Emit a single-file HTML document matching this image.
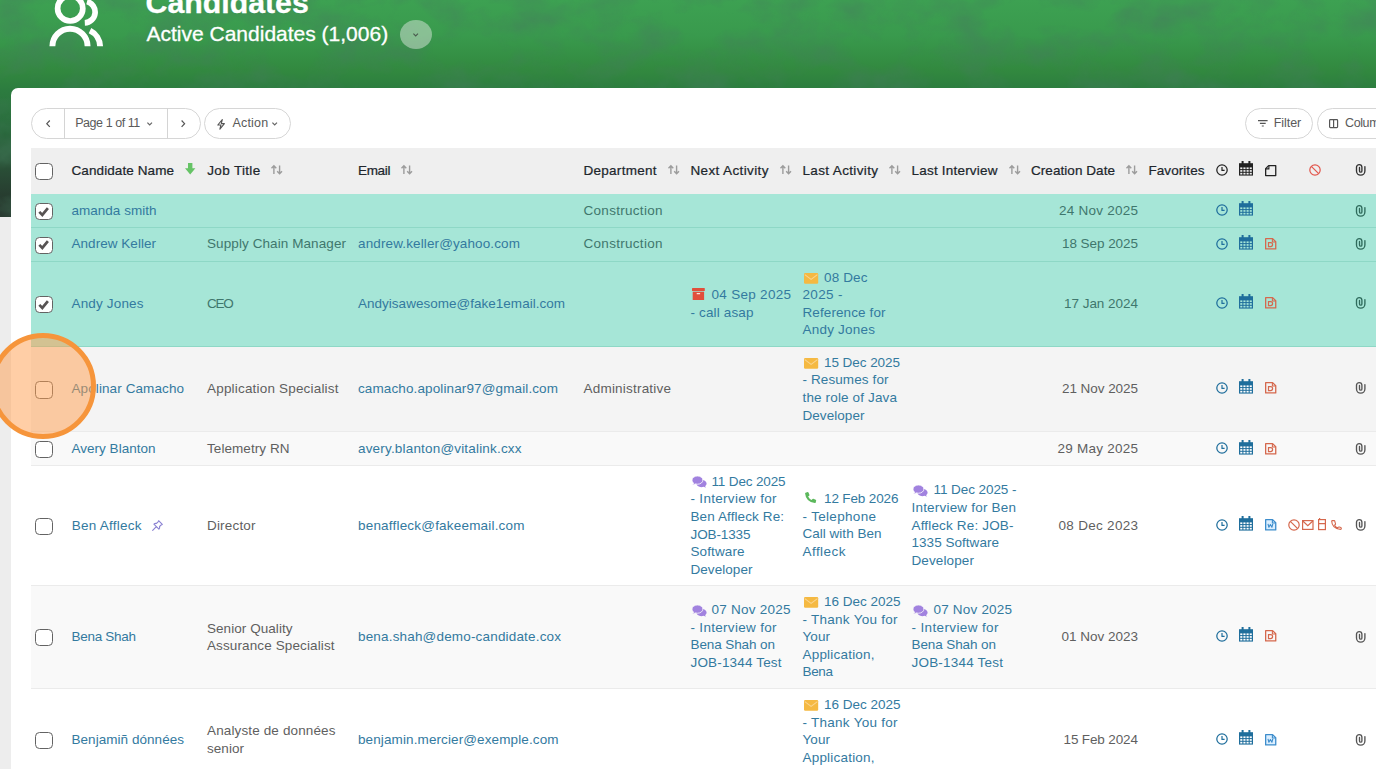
<!DOCTYPE html>
<html lang="en">
<head>
<meta charset="utf-8">
<title>Candidates</title>
<style>
*{box-sizing:border-box;margin:0;padding:0}
html,body{width:1376px;height:769px;overflow:hidden;background:#ededed;font-family:"Liberation Sans",sans-serif;font-size:13.5px;color:#5f5f5f}
body{position:relative}
a{text-decoration:none}
.abs{position:absolute}
svg{display:block;overflow:visible}
#banner{position:absolute;left:0;top:0;width:1376px;height:217px;overflow:hidden;background:linear-gradient(180deg,#3da152 0px,#399a4d 35px,#32893f 70px,#2c7c3f 90px,#2a6a3d 130px,#294a35 175px,#252f2a 217px)}
#card{position:absolute;left:11px;top:88px;width:1400px;height:700px;background:#fff;border-radius:7px 0 0 0}
#title{position:absolute;left:145.5px;top:-14.8px;font-size:30.3px;line-height:36px;font-weight:bold;color:#fff;white-space:nowrap;-webkit-text-stroke:.3px #fff}
#subtitle{position:absolute;left:146.5px;top:21.5px;font-size:21px;line-height:24px;color:#fff;white-space:nowrap;-webkit-text-stroke:.3px #fff}
#ddbtn{position:absolute;left:400px;top:20px;width:32px;height:29px;border-radius:50%;background:rgba(235,240,235,.45)}
.pill{position:absolute;top:108px;height:30.5px;border:1px solid #d6d6d6;border-radius:16px;background:#fff}
.hdr{position:absolute;left:31px;top:148px;width:1345px;height:46px;background:#efefef}
.row{position:absolute;left:31px;width:1345px;border-bottom:1px solid #ebebeb;background:#fff}
.row.sel{background:#a6e6d7;border-bottom:1px solid #8ed8c6}
.row.g{background:#f4f4f4}
.row.g2{background:#f9f9f9}
.tx{position:absolute;white-space:nowrap;line-height:20px;height:20px;font-size:13.5px}
.tx.h{color:#20262c;-webkit-text-stroke:.22px #20262c}
.tx.p{font-size:12.5px;color:#5a5a5a}
.cb{position:absolute;left:35px;width:17.6px;height:17.2px;border:1.3px solid #636363;border-radius:4.5px;background:#fff}
</style>
</head>
<body>
<div id="banner">
<svg width="1376" height="217" viewBox="0 0 1376 217" style="position:absolute;left:0;top:0"><filter id="tex" x="0" y="0" width="100%" height="100%"><feTurbulence type="fractalNoise" baseFrequency="0.022 0.03" numOctaves="4" seed="11"/><feColorMatrix type="matrix" values="0 0 0 0 0.06  0 0 0 0 0.2  0 0 0 0 0.11  1.6 0 0 0 -0.62"/></filter><rect x="0" y="0" width="1376" height="217" filter="url(#tex)" opacity=".65"/></svg>
</div>
<div id="card"></div>
<svg class="abs" style="left:0;top:0" width="120" height="60" viewBox="0 0 120 60"><g fill="none" stroke="#fff" stroke-width="5.7">
<circle cx="70.2" cy="8.4" r="12.6"/>
<path d="M52.4 46.3A17.6 17.6 0 0 1 87.6 46.3" stroke-width="5.9"/>
<path d="M87 1.6A10.8 10.8 0 0 1 84.8 22.85"/>
<path d="M90 30.7A17.8 17.8 0 0 1 100.1 46.3" stroke-width="5.9"/>
</g></svg>
<div id="title">Candidates</div>
<div id="subtitle">Active Candidates (1,006)</div>
<div id="ddbtn"></div>
<svg class="abs" style="left:413.3px;top:33.2px" width="5.4" height="4" viewBox="0 0 5.4 4"><path d="M.4 .6L2.7 3L5 .6" fill="none" stroke="#4a5a4e" stroke-width="1.1"/></svg>
<div class="hdr"></div>
<div class="row sel" style="top:194px;height:34px"></div>
<div class="row sel" style="top:228px;height:34px"></div>
<div class="row sel" style="top:262px;height:85px"></div>
<div class="row g" style="top:347px;height:85px"></div>
<div class="row g2" style="top:432px;height:33.5px"></div>
<div class="row " style="top:465.5px;height:120.5px"></div>
<div class="row g2" style="top:586px;height:103px"></div>
<div class="row " style="top:689px;height:102px"></div>
<svg class="abs" style="left:270.5px;top:165.2px" width="11.6" height="9.6" viewBox="0 0 11.6 9.6" preserveAspectRatio="none"><path d="M2.9 9V.9M.5 3.3L2.9 .8L5.3 3.3M8.6 .6V8.7M6.2 6.3L8.6 8.8L11 6.3" fill="none" stroke="#9c9c9c" stroke-width="1.4"/></svg>
<svg class="abs" style="left:401px;top:165.2px" width="11.6" height="9.6" viewBox="0 0 11.6 9.6" preserveAspectRatio="none"><path d="M2.9 9V.9M.5 3.3L2.9 .8L5.3 3.3M8.6 .6V8.7M6.2 6.3L8.6 8.8L11 6.3" fill="none" stroke="#9c9c9c" stroke-width="1.4"/></svg>
<svg class="abs" style="left:667.5px;top:165.2px" width="11.6" height="9.6" viewBox="0 0 11.6 9.6" preserveAspectRatio="none"><path d="M2.9 9V.9M.5 3.3L2.9 .8L5.3 3.3M8.6 .6V8.7M6.2 6.3L8.6 8.8L11 6.3" fill="none" stroke="#9c9c9c" stroke-width="1.4"/></svg>
<svg class="abs" style="left:779.5px;top:165.2px" width="11.6" height="9.6" viewBox="0 0 11.6 9.6" preserveAspectRatio="none"><path d="M2.9 9V.9M.5 3.3L2.9 .8L5.3 3.3M8.6 .6V8.7M6.2 6.3L8.6 8.8L11 6.3" fill="none" stroke="#9c9c9c" stroke-width="1.4"/></svg>
<svg class="abs" style="left:889px;top:165.2px" width="11.6" height="9.6" viewBox="0 0 11.6 9.6" preserveAspectRatio="none"><path d="M2.9 9V.9M.5 3.3L2.9 .8L5.3 3.3M8.6 .6V8.7M6.2 6.3L8.6 8.8L11 6.3" fill="none" stroke="#9c9c9c" stroke-width="1.4"/></svg>
<svg class="abs" style="left:1008.5px;top:165.2px" width="11.6" height="9.6" viewBox="0 0 11.6 9.6" preserveAspectRatio="none"><path d="M2.9 9V.9M.5 3.3L2.9 .8L5.3 3.3M8.6 .6V8.7M6.2 6.3L8.6 8.8L11 6.3" fill="none" stroke="#9c9c9c" stroke-width="1.4"/></svg>
<svg class="abs" style="left:1126px;top:165.2px" width="11.6" height="9.6" viewBox="0 0 11.6 9.6" preserveAspectRatio="none"><path d="M2.9 9V.9M.5 3.3L2.9 .8L5.3 3.3M8.6 .6V8.7M6.2 6.3L8.6 8.8L11 6.3" fill="none" stroke="#9c9c9c" stroke-width="1.4"/></svg>
<svg class="abs" style="left:184.7px;top:163px" width="10.4" height="11.4" viewBox="0 0 10.4 11.4" preserveAspectRatio="none"><path d="M3 0H7.4V5.2H10.4L5.2 11.4L0 5.2H3Z" fill="#66c366"/></svg>
<svg class="abs" style="left:1216.4px;top:164.2px" width="12" height="12" viewBox="0 0 12 12" preserveAspectRatio="none"><circle cx="6" cy="6" r="5.2" fill="none" stroke="#222" stroke-width="1.25"/><path d="M6 3.1V6.3H8.6" fill="none" stroke="#222" stroke-width="1.2"/></svg>
<svg class="abs" style="left:1239.1px;top:161.1px" width="14" height="14.6" viewBox="0 0 14 14.6" preserveAspectRatio="none"><path fill="#222" d="M0 2.2H14V14.6H0Z"/><rect x="2.6" y="0" width="2" height="3.4" fill="#222"/><rect x="9.4" y="0" width="2" height="3.4" fill="#222"/><rect x="1.25" y="6.4" width="2.1" height="1.7" fill="#efefef"/><rect x="4.4" y="6.4" width="2.1" height="1.7" fill="#efefef"/><rect x="7.55" y="6.4" width="2.1" height="1.7" fill="#efefef"/><rect x="10.7" y="6.4" width="2.1" height="1.7" fill="#efefef"/><rect x="1.25" y="9.1" width="2.1" height="1.7" fill="#efefef"/><rect x="4.4" y="9.1" width="2.1" height="1.7" fill="#efefef"/><rect x="7.55" y="9.1" width="2.1" height="1.7" fill="#efefef"/><rect x="10.7" y="9.1" width="2.1" height="1.7" fill="#efefef"/><rect x="1.25" y="11.8" width="2.1" height="1.7" fill="#efefef"/><rect x="4.4" y="11.8" width="2.1" height="1.7" fill="#efefef"/><rect x="7.55" y="11.8" width="2.1" height="1.7" fill="#efefef"/><rect x="10.7" y="11.8" width="2.1" height="1.7" fill="#efefef"/></svg>
<svg class="abs" style="left:1264.7px;top:164.5px" width="11.4" height="11.2" viewBox="0 0 11.4 11.2" preserveAspectRatio="none"><path d="M3.6 .65H10.75V10.55H.65V3.6Z" fill="none" stroke="#222" stroke-width="1.3" stroke-linejoin="round"/><path d="M3.9 .9V3.9H.9" fill="none" stroke="#222" stroke-width="1.1"/></svg>
<svg class="abs" style="left:1309.2px;top:164.3px" width="12" height="12" viewBox="0 0 12 12" preserveAspectRatio="none"><circle cx="6" cy="6" r="5.2" fill="none" stroke="#e2564c" stroke-width="1.2"/><path d="M2.32308 2.32308L9.67692 9.67692" stroke="#e2564c" stroke-width="1.2"/></svg>
<svg class="abs" style="left:1355.4px;top:164.4px" width="11" height="11.6" viewBox="0 0 11 11.6" preserveAspectRatio="none"><path d="M9.9 2.6V7A4.2 4.2 0 0 1 1.5 7V3.3A2.7 2.7 0 0 1 6.9 3.3V7A1.2 1.2 0 0 1 4.5 7V3.4" fill="none" stroke="#333" stroke-width="1.35" stroke-linecap="round"/></svg>
<div class="cb" style="top:163px"></div>
<div class="cb" style="top:203px"><svg width="17" height="17" viewBox="0 0 17 17" style="position:absolute;left:-1.3px;top:-1.3px"><path d="M4.3 8.9L7.3 11.9L12.9 5.1" fill="none" stroke="#575353" stroke-width="2.7"/></svg></div>
<svg class="abs" style="left:1216.4px;top:204.2px" width="12" height="12" viewBox="0 0 12 12" preserveAspectRatio="none"><circle cx="6" cy="6" r="5.2" fill="none" stroke="#1f6e9c" stroke-width="1.25"/><path d="M6 3.1V6.3H8.6" fill="none" stroke="#1f6e9c" stroke-width="1.2"/></svg>
<svg class="abs" style="left:1239.1px;top:201.4px" width="14" height="14.6" viewBox="0 0 14 14.6" preserveAspectRatio="none"><path fill="#1f6e9c" d="M0 2.2H14V14.6H0Z"/><rect x="2.6" y="0" width="2" height="3.4" fill="#1f6e9c"/><rect x="9.4" y="0" width="2" height="3.4" fill="#1f6e9c"/><rect x="1.25" y="6.4" width="2.1" height="1.7" fill="#a6e6d7"/><rect x="4.4" y="6.4" width="2.1" height="1.7" fill="#a6e6d7"/><rect x="7.55" y="6.4" width="2.1" height="1.7" fill="#a6e6d7"/><rect x="10.7" y="6.4" width="2.1" height="1.7" fill="#a6e6d7"/><rect x="1.25" y="9.1" width="2.1" height="1.7" fill="#a6e6d7"/><rect x="4.4" y="9.1" width="2.1" height="1.7" fill="#a6e6d7"/><rect x="7.55" y="9.1" width="2.1" height="1.7" fill="#a6e6d7"/><rect x="10.7" y="9.1" width="2.1" height="1.7" fill="#a6e6d7"/><rect x="1.25" y="11.8" width="2.1" height="1.7" fill="#a6e6d7"/><rect x="4.4" y="11.8" width="2.1" height="1.7" fill="#a6e6d7"/><rect x="7.55" y="11.8" width="2.1" height="1.7" fill="#a6e6d7"/><rect x="10.7" y="11.8" width="2.1" height="1.7" fill="#a6e6d7"/></svg>
<svg class="abs" style="left:1354.9px;top:204.6px" width="11" height="11.6" viewBox="0 0 11 11.6" preserveAspectRatio="none"><path d="M9.9 2.6V7A4.2 4.2 0 0 1 1.5 7V3.3A2.7 2.7 0 0 1 6.9 3.3V7A1.2 1.2 0 0 1 4.5 7V3.4" fill="none" stroke="#2f6b5c" stroke-width="1.35" stroke-linecap="round"/></svg>
<div class="cb" style="top:236.6px"><svg width="17" height="17" viewBox="0 0 17 17" style="position:absolute;left:-1.3px;top:-1.3px"><path d="M4.3 8.9L7.3 11.9L12.9 5.1" fill="none" stroke="#575353" stroke-width="2.7"/></svg></div>
<svg class="abs" style="left:1216.4px;top:237.8px" width="12" height="12" viewBox="0 0 12 12" preserveAspectRatio="none"><circle cx="6" cy="6" r="5.2" fill="none" stroke="#1f6e9c" stroke-width="1.25"/><path d="M6 3.1V6.3H8.6" fill="none" stroke="#1f6e9c" stroke-width="1.2"/></svg>
<svg class="abs" style="left:1239.1px;top:235px" width="14" height="14.6" viewBox="0 0 14 14.6" preserveAspectRatio="none"><path fill="#1f6e9c" d="M0 2.2H14V14.6H0Z"/><rect x="2.6" y="0" width="2" height="3.4" fill="#1f6e9c"/><rect x="9.4" y="0" width="2" height="3.4" fill="#1f6e9c"/><rect x="1.25" y="6.4" width="2.1" height="1.7" fill="#a6e6d7"/><rect x="4.4" y="6.4" width="2.1" height="1.7" fill="#a6e6d7"/><rect x="7.55" y="6.4" width="2.1" height="1.7" fill="#a6e6d7"/><rect x="10.7" y="6.4" width="2.1" height="1.7" fill="#a6e6d7"/><rect x="1.25" y="9.1" width="2.1" height="1.7" fill="#a6e6d7"/><rect x="4.4" y="9.1" width="2.1" height="1.7" fill="#a6e6d7"/><rect x="7.55" y="9.1" width="2.1" height="1.7" fill="#a6e6d7"/><rect x="10.7" y="9.1" width="2.1" height="1.7" fill="#a6e6d7"/><rect x="1.25" y="11.8" width="2.1" height="1.7" fill="#a6e6d7"/><rect x="4.4" y="11.8" width="2.1" height="1.7" fill="#a6e6d7"/><rect x="7.55" y="11.8" width="2.1" height="1.7" fill="#a6e6d7"/><rect x="10.7" y="11.8" width="2.1" height="1.7" fill="#a6e6d7"/></svg>
<svg class="abs" style="left:1264.8px;top:238.1px" width="11.4" height="11.6" viewBox="0 0 11.4 11.6" preserveAspectRatio="none"><path d="M.65 .65H7.6L10.75 3.8V10.95H.65Z" fill="none" stroke="#d5684d" stroke-width="1.3" stroke-linejoin="round"/><path d="M7.4 .9V4H10.5" fill="none" stroke="#d5684d" stroke-width="1.1"/><path d="M3.5 4.6H5.6A2 2 0 0 1 5.6 8.6H3.5Z" fill="none" stroke="#d5684d" stroke-width="1.2"/></svg>
<svg class="abs" style="left:1354.9px;top:238.2px" width="11" height="11.6" viewBox="0 0 11 11.6" preserveAspectRatio="none"><path d="M9.9 2.6V7A4.2 4.2 0 0 1 1.5 7V3.3A2.7 2.7 0 0 1 6.9 3.3V7A1.2 1.2 0 0 1 4.5 7V3.4" fill="none" stroke="#2f6b5c" stroke-width="1.35" stroke-linecap="round"/></svg>
<div class="cb" style="top:296.3px"><svg width="17" height="17" viewBox="0 0 17 17" style="position:absolute;left:-1.3px;top:-1.3px"><path d="M4.3 8.9L7.3 11.9L12.9 5.1" fill="none" stroke="#575353" stroke-width="2.7"/></svg></div>
<svg class="abs" style="left:1216.4px;top:296.8px" width="12" height="12" viewBox="0 0 12 12" preserveAspectRatio="none"><circle cx="6" cy="6" r="5.2" fill="none" stroke="#1f6e9c" stroke-width="1.25"/><path d="M6 3.1V6.3H8.6" fill="none" stroke="#1f6e9c" stroke-width="1.2"/></svg>
<svg class="abs" style="left:1239.1px;top:294px" width="14" height="14.6" viewBox="0 0 14 14.6" preserveAspectRatio="none"><path fill="#1f6e9c" d="M0 2.2H14V14.6H0Z"/><rect x="2.6" y="0" width="2" height="3.4" fill="#1f6e9c"/><rect x="9.4" y="0" width="2" height="3.4" fill="#1f6e9c"/><rect x="1.25" y="6.4" width="2.1" height="1.7" fill="#a6e6d7"/><rect x="4.4" y="6.4" width="2.1" height="1.7" fill="#a6e6d7"/><rect x="7.55" y="6.4" width="2.1" height="1.7" fill="#a6e6d7"/><rect x="10.7" y="6.4" width="2.1" height="1.7" fill="#a6e6d7"/><rect x="1.25" y="9.1" width="2.1" height="1.7" fill="#a6e6d7"/><rect x="4.4" y="9.1" width="2.1" height="1.7" fill="#a6e6d7"/><rect x="7.55" y="9.1" width="2.1" height="1.7" fill="#a6e6d7"/><rect x="10.7" y="9.1" width="2.1" height="1.7" fill="#a6e6d7"/><rect x="1.25" y="11.8" width="2.1" height="1.7" fill="#a6e6d7"/><rect x="4.4" y="11.8" width="2.1" height="1.7" fill="#a6e6d7"/><rect x="7.55" y="11.8" width="2.1" height="1.7" fill="#a6e6d7"/><rect x="10.7" y="11.8" width="2.1" height="1.7" fill="#a6e6d7"/></svg>
<svg class="abs" style="left:1264.8px;top:297.1px" width="11.4" height="11.6" viewBox="0 0 11.4 11.6" preserveAspectRatio="none"><path d="M.65 .65H7.6L10.75 3.8V10.95H.65Z" fill="none" stroke="#d5684d" stroke-width="1.3" stroke-linejoin="round"/><path d="M7.4 .9V4H10.5" fill="none" stroke="#d5684d" stroke-width="1.1"/><path d="M3.5 4.6H5.6A2 2 0 0 1 5.6 8.6H3.5Z" fill="none" stroke="#d5684d" stroke-width="1.2"/></svg>
<svg class="abs" style="left:1354.9px;top:297.2px" width="11" height="11.6" viewBox="0 0 11 11.6" preserveAspectRatio="none"><path d="M9.9 2.6V7A4.2 4.2 0 0 1 1.5 7V3.3A2.7 2.7 0 0 1 6.9 3.3V7A1.2 1.2 0 0 1 4.5 7V3.4" fill="none" stroke="#2f6b5c" stroke-width="1.35" stroke-linecap="round"/></svg>
<svg class="abs" style="left:692.3px;top:287.925px" width="12.8" height="12" viewBox="0 0 12.8 12" preserveAspectRatio="none"><rect x="0" y="0" width="12.8" height="3.1" rx=".6" fill="#e14f3b"/><path d="M.7 3.7H12.1V12H.7Z" fill="#e14f3b"/><rect x="4.6" y="5.1" width="3.6" height="1.1" rx=".5" fill="#fde3de"/></svg>
<svg class="abs" style="left:803.9px;top:272.575px" width="14.2" height="10.8" viewBox="0 0 14.2 10.8" preserveAspectRatio="none"><rect x="0" y="0" width="14.2" height="10.8" rx="1.2" fill="#f5b942"/><path d="M.8 1.6L7.1 6.4L13.4 1.6" fill="none" stroke="#fad590" stroke-width="1.1"/></svg>
<div class="cb" style="top:381.4px"></div>
<svg class="abs" style="left:1216.4px;top:382px" width="12" height="12" viewBox="0 0 12 12" preserveAspectRatio="none"><circle cx="6" cy="6" r="5.2" fill="none" stroke="#1f6e9c" stroke-width="1.25"/><path d="M6 3.1V6.3H8.6" fill="none" stroke="#1f6e9c" stroke-width="1.2"/></svg>
<svg class="abs" style="left:1239.1px;top:379.2px" width="14" height="14.6" viewBox="0 0 14 14.6" preserveAspectRatio="none"><path fill="#1f6e9c" d="M0 2.2H14V14.6H0Z"/><rect x="2.6" y="0" width="2" height="3.4" fill="#1f6e9c"/><rect x="9.4" y="0" width="2" height="3.4" fill="#1f6e9c"/><rect x="1.25" y="6.4" width="2.1" height="1.7" fill="#fff"/><rect x="4.4" y="6.4" width="2.1" height="1.7" fill="#fff"/><rect x="7.55" y="6.4" width="2.1" height="1.7" fill="#fff"/><rect x="10.7" y="6.4" width="2.1" height="1.7" fill="#fff"/><rect x="1.25" y="9.1" width="2.1" height="1.7" fill="#fff"/><rect x="4.4" y="9.1" width="2.1" height="1.7" fill="#fff"/><rect x="7.55" y="9.1" width="2.1" height="1.7" fill="#fff"/><rect x="10.7" y="9.1" width="2.1" height="1.7" fill="#fff"/><rect x="1.25" y="11.8" width="2.1" height="1.7" fill="#fff"/><rect x="4.4" y="11.8" width="2.1" height="1.7" fill="#fff"/><rect x="7.55" y="11.8" width="2.1" height="1.7" fill="#fff"/><rect x="10.7" y="11.8" width="2.1" height="1.7" fill="#fff"/></svg>
<svg class="abs" style="left:1264.8px;top:382.3px" width="11.4" height="11.6" viewBox="0 0 11.4 11.6" preserveAspectRatio="none"><path d="M.65 .65H7.6L10.75 3.8V10.95H.65Z" fill="none" stroke="#d5684d" stroke-width="1.3" stroke-linejoin="round"/><path d="M7.4 .9V4H10.5" fill="none" stroke="#d5684d" stroke-width="1.1"/><path d="M3.5 4.6H5.6A2 2 0 0 1 5.6 8.6H3.5Z" fill="none" stroke="#d5684d" stroke-width="1.2"/></svg>
<svg class="abs" style="left:1354.9px;top:382.4px" width="11" height="11.6" viewBox="0 0 11 11.6" preserveAspectRatio="none"><path d="M9.9 2.6V7A4.2 4.2 0 0 1 1.5 7V3.3A2.7 2.7 0 0 1 6.9 3.3V7A1.2 1.2 0 0 1 4.5 7V3.4" fill="none" stroke="#555" stroke-width="1.35" stroke-linecap="round"/></svg>
<svg class="abs" style="left:803.9px;top:357.675px" width="14.2" height="10.8" viewBox="0 0 14.2 10.8" preserveAspectRatio="none"><rect x="0" y="0" width="14.2" height="10.8" rx="1.2" fill="#f5b942"/><path d="M.8 1.6L7.1 6.4L13.4 1.6" fill="none" stroke="#fad590" stroke-width="1.1"/></svg>
<div class="cb" style="top:441px"></div>
<svg class="abs" style="left:1216.4px;top:442.4px" width="12" height="12" viewBox="0 0 12 12" preserveAspectRatio="none"><circle cx="6" cy="6" r="5.2" fill="none" stroke="#1f6e9c" stroke-width="1.25"/><path d="M6 3.1V6.3H8.6" fill="none" stroke="#1f6e9c" stroke-width="1.2"/></svg>
<svg class="abs" style="left:1239.1px;top:439.6px" width="14" height="14.6" viewBox="0 0 14 14.6" preserveAspectRatio="none"><path fill="#1f6e9c" d="M0 2.2H14V14.6H0Z"/><rect x="2.6" y="0" width="2" height="3.4" fill="#1f6e9c"/><rect x="9.4" y="0" width="2" height="3.4" fill="#1f6e9c"/><rect x="1.25" y="6.4" width="2.1" height="1.7" fill="#fff"/><rect x="4.4" y="6.4" width="2.1" height="1.7" fill="#fff"/><rect x="7.55" y="6.4" width="2.1" height="1.7" fill="#fff"/><rect x="10.7" y="6.4" width="2.1" height="1.7" fill="#fff"/><rect x="1.25" y="9.1" width="2.1" height="1.7" fill="#fff"/><rect x="4.4" y="9.1" width="2.1" height="1.7" fill="#fff"/><rect x="7.55" y="9.1" width="2.1" height="1.7" fill="#fff"/><rect x="10.7" y="9.1" width="2.1" height="1.7" fill="#fff"/><rect x="1.25" y="11.8" width="2.1" height="1.7" fill="#fff"/><rect x="4.4" y="11.8" width="2.1" height="1.7" fill="#fff"/><rect x="7.55" y="11.8" width="2.1" height="1.7" fill="#fff"/><rect x="10.7" y="11.8" width="2.1" height="1.7" fill="#fff"/></svg>
<svg class="abs" style="left:1264.8px;top:442.7px" width="11.4" height="11.6" viewBox="0 0 11.4 11.6" preserveAspectRatio="none"><path d="M.65 .65H7.6L10.75 3.8V10.95H.65Z" fill="none" stroke="#d5684d" stroke-width="1.3" stroke-linejoin="round"/><path d="M7.4 .9V4H10.5" fill="none" stroke="#d5684d" stroke-width="1.1"/><path d="M3.5 4.6H5.6A2 2 0 0 1 5.6 8.6H3.5Z" fill="none" stroke="#d5684d" stroke-width="1.2"/></svg>
<svg class="abs" style="left:1354.9px;top:442.8px" width="11" height="11.6" viewBox="0 0 11 11.6" preserveAspectRatio="none"><path d="M9.9 2.6V7A4.2 4.2 0 0 1 1.5 7V3.3A2.7 2.7 0 0 1 6.9 3.3V7A1.2 1.2 0 0 1 4.5 7V3.4" fill="none" stroke="#555" stroke-width="1.35" stroke-linecap="round"/></svg>
<svg class="abs" style="left:152.4px;top:519.7px" width="11" height="11" viewBox="0 0 11 11" preserveAspectRatio="none"><path d="M6.6 .7L10.3 4.4L9.2 4.9L7.6 6.5Q7.9 8 6.9 9.1L1.9 4.1Q3 3.1 4.5 3.4L6.1 1.8ZM4.3 6.7L.7 10.3" fill="none" stroke="#8a80d2" stroke-width="1.1" stroke-linejoin="round" stroke-linecap="round"/></svg>
<div class="cb" style="top:518.1px"></div>
<svg class="abs" style="left:1216.4px;top:518.9px" width="12" height="12" viewBox="0 0 12 12" preserveAspectRatio="none"><circle cx="6" cy="6" r="5.2" fill="none" stroke="#1f6e9c" stroke-width="1.25"/><path d="M6 3.1V6.3H8.6" fill="none" stroke="#1f6e9c" stroke-width="1.2"/></svg>
<svg class="abs" style="left:1239.1px;top:516.1px" width="14" height="14.6" viewBox="0 0 14 14.6" preserveAspectRatio="none"><path fill="#1f6e9c" d="M0 2.2H14V14.6H0Z"/><rect x="2.6" y="0" width="2" height="3.4" fill="#1f6e9c"/><rect x="9.4" y="0" width="2" height="3.4" fill="#1f6e9c"/><rect x="1.25" y="6.4" width="2.1" height="1.7" fill="#fff"/><rect x="4.4" y="6.4" width="2.1" height="1.7" fill="#fff"/><rect x="7.55" y="6.4" width="2.1" height="1.7" fill="#fff"/><rect x="10.7" y="6.4" width="2.1" height="1.7" fill="#fff"/><rect x="1.25" y="9.1" width="2.1" height="1.7" fill="#fff"/><rect x="4.4" y="9.1" width="2.1" height="1.7" fill="#fff"/><rect x="7.55" y="9.1" width="2.1" height="1.7" fill="#fff"/><rect x="10.7" y="9.1" width="2.1" height="1.7" fill="#fff"/><rect x="1.25" y="11.8" width="2.1" height="1.7" fill="#fff"/><rect x="4.4" y="11.8" width="2.1" height="1.7" fill="#fff"/><rect x="7.55" y="11.8" width="2.1" height="1.7" fill="#fff"/><rect x="10.7" y="11.8" width="2.1" height="1.7" fill="#fff"/></svg>
<svg class="abs" style="left:1264.8px;top:519.2px" width="11.4" height="11.6" viewBox="0 0 11.4 11.6" preserveAspectRatio="none"><path d="M.65 .65H7.6L10.75 3.8V10.95H.65Z" fill="#dcefff" stroke="#3d8dcc" stroke-width="1.3" stroke-linejoin="round"/><path d="M7.4 .9V4H10.5" fill="none" stroke="#3d8dcc" stroke-width="1.1"/><path d="M3 4.8L3.9 8.3L5.4 5.6L6.9 8.3L7.8 4.8" fill="none" stroke="#3d8dcc" stroke-width="1.1" stroke-linejoin="round"/></svg>
<svg class="abs" style="left:1354.9px;top:519.3px" width="11" height="11.6" viewBox="0 0 11 11.6" preserveAspectRatio="none"><path d="M9.9 2.6V7A4.2 4.2 0 0 1 1.5 7V3.3A2.7 2.7 0 0 1 6.9 3.3V7A1.2 1.2 0 0 1 4.5 7V3.4" fill="none" stroke="#555" stroke-width="1.35" stroke-linecap="round"/></svg>
<svg class="abs" style="left:1288.1px;top:518.7px" width="12" height="12" viewBox="0 0 12 12" preserveAspectRatio="none"><circle cx="6" cy="6" r="5.2" fill="none" stroke="#d5684d" stroke-width="1.2"/><path d="M2.32308 2.32308L9.67692 9.67692" stroke="#d5684d" stroke-width="1.2"/></svg>
<svg class="abs" style="left:1302.3px;top:519.7px" width="11.6" height="10" viewBox="0 0 11.6 10" preserveAspectRatio="none"><rect x=".6" y=".6" width="10.4" height="8.8" fill="none" stroke="#d5684d" stroke-width="1.2"/><path d="M.8 1L5.8 5.6L10.8 1" fill="none" stroke="#d5684d" stroke-width="1.2"/></svg>
<svg class="abs" style="left:1318px;top:518.2px" width="8" height="12.2" viewBox="0 0 8 12.2" preserveAspectRatio="none"><rect x=".6" y="1.6" width="6.8" height="10" fill="none" stroke="#d5684d" stroke-width="1.2"/><path d="M.6 5.6H7.4M1.6 0V1.6" fill="none" stroke="#d5684d" stroke-width="1.2"/></svg>
<svg class="abs" style="left:1331px;top:519.7px" width="10.8" height="10" viewBox="0 0 10.8 10" preserveAspectRatio="none"><path d="M.7 1.2Q.5 .6 1.2 .6H3.1Q3.7 .6 3.8 1.2Q4 2.5 4.5 3.6Q4.7 4.1 4.3 4.5L3.6 5.2Q4.6 7 6.6 8L7.4 7.2Q7.8 6.8 8.3 7Q9.2 7.4 9.8 7.5Q10.3 7.6 10.3 8.2V8.8Q10.3 9.4 9.7 9.4Q5.5 9.3 2.9 6.6Q.8 4.3 .7 1.2Z" fill="none" stroke="#d5684d" stroke-width="1.1" stroke-linejoin="round"/></svg>
<svg class="abs" style="left:691.8px;top:476.125px" width="14.6" height="11.5" viewBox="0 0 15 10.6" preserveAspectRatio="none"><path d="M9.6 3.4C12.6 3.4 15 5 15 7C15 8 14.4 8.8 13.5 9.4C13.7 9.9 14.1 10.3 14.6 10.6C13.6 10.6 12.7 10.4 12 9.9C11.3 10.1 10.4 10.3 9.6 10.3C6.6 10.3 4.6 8.8 4.6 7C4.6 5 6.6 3.4 9.6 3.4Z" fill="#a182df"/><path d="M5.6 0C8.7 0 11.2 1.7 11.2 3.8C11.2 5.9 8.7 7.6 5.6 7.6C4.8 7.6 4 7.5 3.3 7.3C2.5 7.9 1.5 8.2 .3 8.2C.9 7.8 1.4 7.2 1.6 6.5C.6 5.8 0 4.9 0 3.8C0 1.7 2.5 0 5.6 0Z" fill="#a182df" stroke="#fff" stroke-width=".8"/></svg>
<svg class="abs" style="left:805.3px;top:492.275px" width="11.4" height="11" viewBox="0 0 11.4 11" preserveAspectRatio="none"><path d="M.1 1.6Q0 .9 .6 .7L2.6 .1Q3.2 0 3.5 .6L4.4 2.8Q4.6 3.3 4.2 3.7L3.1 4.6Q4.2 6.9 6.6 8L7.5 6.9Q7.9 6.5 8.4 6.7L10.7 7.7Q11.3 8 11.2 8.6L10.7 10.5Q10.5 11.1 9.8 11Q5.6 10.7 2.9 8Q.3 5.3 .1 1.6Z" fill="#5cb85c"/></svg>
<svg class="abs" style="left:913.3px;top:484.6px" width="14.6" height="11.5" viewBox="0 0 15 10.6" preserveAspectRatio="none"><path d="M9.6 3.4C12.6 3.4 15 5 15 7C15 8 14.4 8.8 13.5 9.4C13.7 9.9 14.1 10.3 14.6 10.6C13.6 10.6 12.7 10.4 12 9.9C11.3 10.1 10.4 10.3 9.6 10.3C6.6 10.3 4.6 8.8 4.6 7C4.6 5 6.6 3.4 9.6 3.4Z" fill="#a182df"/><path d="M5.6 0C8.7 0 11.2 1.7 11.2 3.8C11.2 5.9 8.7 7.6 5.6 7.6C4.8 7.6 4 7.5 3.3 7.3C2.5 7.9 1.5 8.2 .3 8.2C.9 7.8 1.4 7.2 1.6 6.5C.6 5.8 0 4.9 0 3.8C0 1.7 2.5 0 5.6 0Z" fill="#a182df" stroke="#fff" stroke-width=".8"/></svg>
<div class="cb" style="top:628.9px"></div>
<svg class="abs" style="left:1216.4px;top:630.1px" width="12" height="12" viewBox="0 0 12 12" preserveAspectRatio="none"><circle cx="6" cy="6" r="5.2" fill="none" stroke="#1f6e9c" stroke-width="1.25"/><path d="M6 3.1V6.3H8.6" fill="none" stroke="#1f6e9c" stroke-width="1.2"/></svg>
<svg class="abs" style="left:1239.1px;top:627.3px" width="14" height="14.6" viewBox="0 0 14 14.6" preserveAspectRatio="none"><path fill="#1f6e9c" d="M0 2.2H14V14.6H0Z"/><rect x="2.6" y="0" width="2" height="3.4" fill="#1f6e9c"/><rect x="9.4" y="0" width="2" height="3.4" fill="#1f6e9c"/><rect x="1.25" y="6.4" width="2.1" height="1.7" fill="#fff"/><rect x="4.4" y="6.4" width="2.1" height="1.7" fill="#fff"/><rect x="7.55" y="6.4" width="2.1" height="1.7" fill="#fff"/><rect x="10.7" y="6.4" width="2.1" height="1.7" fill="#fff"/><rect x="1.25" y="9.1" width="2.1" height="1.7" fill="#fff"/><rect x="4.4" y="9.1" width="2.1" height="1.7" fill="#fff"/><rect x="7.55" y="9.1" width="2.1" height="1.7" fill="#fff"/><rect x="10.7" y="9.1" width="2.1" height="1.7" fill="#fff"/><rect x="1.25" y="11.8" width="2.1" height="1.7" fill="#fff"/><rect x="4.4" y="11.8" width="2.1" height="1.7" fill="#fff"/><rect x="7.55" y="11.8" width="2.1" height="1.7" fill="#fff"/><rect x="10.7" y="11.8" width="2.1" height="1.7" fill="#fff"/></svg>
<svg class="abs" style="left:1264.8px;top:630.4px" width="11.4" height="11.6" viewBox="0 0 11.4 11.6" preserveAspectRatio="none"><path d="M.65 .65H7.6L10.75 3.8V10.95H.65Z" fill="none" stroke="#d5684d" stroke-width="1.3" stroke-linejoin="round"/><path d="M7.4 .9V4H10.5" fill="none" stroke="#d5684d" stroke-width="1.1"/><path d="M3.5 4.6H5.6A2 2 0 0 1 5.6 8.6H3.5Z" fill="none" stroke="#d5684d" stroke-width="1.2"/></svg>
<svg class="abs" style="left:1354.9px;top:630.5px" width="11" height="11.6" viewBox="0 0 11 11.6" preserveAspectRatio="none"><path d="M9.9 2.6V7A4.2 4.2 0 0 1 1.5 7V3.3A2.7 2.7 0 0 1 6.9 3.3V7A1.2 1.2 0 0 1 4.5 7V3.4" fill="none" stroke="#555" stroke-width="1.35" stroke-linecap="round"/></svg>
<svg class="abs" style="left:691.8px;top:604.575px" width="14.6" height="11.5" viewBox="0 0 15 10.6" preserveAspectRatio="none"><path d="M9.6 3.4C12.6 3.4 15 5 15 7C15 8 14.4 8.8 13.5 9.4C13.7 9.9 14.1 10.3 14.6 10.6C13.6 10.6 12.7 10.4 12 9.9C11.3 10.1 10.4 10.3 9.6 10.3C6.6 10.3 4.6 8.8 4.6 7C4.6 5 6.6 3.4 9.6 3.4Z" fill="#a182df"/><path d="M5.6 0C8.7 0 11.2 1.7 11.2 3.8C11.2 5.9 8.7 7.6 5.6 7.6C4.8 7.6 4 7.5 3.3 7.3C2.5 7.9 1.5 8.2 .3 8.2C.9 7.8 1.4 7.2 1.6 6.5C.6 5.8 0 4.9 0 3.8C0 1.7 2.5 0 5.6 0Z" fill="#a182df" stroke="#f9f9f9" stroke-width=".8"/></svg>
<svg class="abs" style="left:803.9px;top:596.9px" width="14.2" height="10.8" viewBox="0 0 14.2 10.8" preserveAspectRatio="none"><rect x="0" y="0" width="14.2" height="10.8" rx="1.2" fill="#f5b942"/><path d="M.8 1.6L7.1 6.4L13.4 1.6" fill="none" stroke="#fad590" stroke-width="1.1"/></svg>
<svg class="abs" style="left:913.3px;top:604.575px" width="14.6" height="11.5" viewBox="0 0 15 10.6" preserveAspectRatio="none"><path d="M9.6 3.4C12.6 3.4 15 5 15 7C15 8 14.4 8.8 13.5 9.4C13.7 9.9 14.1 10.3 14.6 10.6C13.6 10.6 12.7 10.4 12 9.9C11.3 10.1 10.4 10.3 9.6 10.3C6.6 10.3 4.6 8.8 4.6 7C4.6 5 6.6 3.4 9.6 3.4Z" fill="#a182df"/><path d="M5.6 0C8.7 0 11.2 1.7 11.2 3.8C11.2 5.9 8.7 7.6 5.6 7.6C4.8 7.6 4 7.5 3.3 7.3C2.5 7.9 1.5 8.2 .3 8.2C.9 7.8 1.4 7.2 1.6 6.5C.6 5.8 0 4.9 0 3.8C0 1.7 2.5 0 5.6 0Z" fill="#a182df" stroke="#f9f9f9" stroke-width=".8"/></svg>
<div class="cb" style="top:732.2px"></div>
<svg class="abs" style="left:1216.4px;top:733.2px" width="12" height="12" viewBox="0 0 12 12" preserveAspectRatio="none"><circle cx="6" cy="6" r="5.2" fill="none" stroke="#1f6e9c" stroke-width="1.25"/><path d="M6 3.1V6.3H8.6" fill="none" stroke="#1f6e9c" stroke-width="1.2"/></svg>
<svg class="abs" style="left:1239.1px;top:730.4px" width="14" height="14.6" viewBox="0 0 14 14.6" preserveAspectRatio="none"><path fill="#1f6e9c" d="M0 2.2H14V14.6H0Z"/><rect x="2.6" y="0" width="2" height="3.4" fill="#1f6e9c"/><rect x="9.4" y="0" width="2" height="3.4" fill="#1f6e9c"/><rect x="1.25" y="6.4" width="2.1" height="1.7" fill="#fff"/><rect x="4.4" y="6.4" width="2.1" height="1.7" fill="#fff"/><rect x="7.55" y="6.4" width="2.1" height="1.7" fill="#fff"/><rect x="10.7" y="6.4" width="2.1" height="1.7" fill="#fff"/><rect x="1.25" y="9.1" width="2.1" height="1.7" fill="#fff"/><rect x="4.4" y="9.1" width="2.1" height="1.7" fill="#fff"/><rect x="7.55" y="9.1" width="2.1" height="1.7" fill="#fff"/><rect x="10.7" y="9.1" width="2.1" height="1.7" fill="#fff"/><rect x="1.25" y="11.8" width="2.1" height="1.7" fill="#fff"/><rect x="4.4" y="11.8" width="2.1" height="1.7" fill="#fff"/><rect x="7.55" y="11.8" width="2.1" height="1.7" fill="#fff"/><rect x="10.7" y="11.8" width="2.1" height="1.7" fill="#fff"/></svg>
<svg class="abs" style="left:1264.8px;top:733.5px" width="11.4" height="11.6" viewBox="0 0 11.4 11.6" preserveAspectRatio="none"><path d="M.65 .65H7.6L10.75 3.8V10.95H.65Z" fill="#dcefff" stroke="#3d8dcc" stroke-width="1.3" stroke-linejoin="round"/><path d="M7.4 .9V4H10.5" fill="none" stroke="#3d8dcc" stroke-width="1.1"/><path d="M3 4.8L3.9 8.3L5.4 5.6L6.9 8.3L7.8 4.8" fill="none" stroke="#3d8dcc" stroke-width="1.1" stroke-linejoin="round"/></svg>
<svg class="abs" style="left:1354.9px;top:733.6px" width="11" height="11.6" viewBox="0 0 11 11.6" preserveAspectRatio="none"><path d="M9.9 2.6V7A4.2 4.2 0 0 1 1.5 7V3.3A2.7 2.7 0 0 1 6.9 3.3V7A1.2 1.2 0 0 1 4.5 7V3.4" fill="none" stroke="#555" stroke-width="1.35" stroke-linecap="round"/></svg>
<svg class="abs" style="left:803.9px;top:700px" width="14.2" height="10.8" viewBox="0 0 14.2 10.8" preserveAspectRatio="none"><rect x="0" y="0" width="14.2" height="10.8" rx="1.2" fill="#f5b942"/><path d="M.8 1.6L7.1 6.4L13.4 1.6" fill="none" stroke="#fad590" stroke-width="1.1"/></svg>
<div class="pill" style="left:31px;width:170px"></div><div class="abs" style="left:64px;top:108px;width:1px;height:30.5px;background:#d4d4d4"></div><div class="abs" style="left:166.5px;top:108px;width:1px;height:30.5px;background:#d4d4d4"></div>
<svg class="abs" style="left:45.6px;top:120.2px" width="4.4" height="7.4" viewBox="0 0 4.4 7.4" preserveAspectRatio="none"><path d="M3.8 .5L.8 3.7L3.8 6.9" fill="none" stroke="#555" stroke-width="1.2"/></svg>
<svg class="abs" style="left:181.4px;top:120.2px" width="4.4" height="7.4" viewBox="0 0 4.4 7.4" preserveAspectRatio="none"><path d="M.6 .5L3.6 3.7L.6 6.9" fill="none" stroke="#555" stroke-width="1.2"/></svg>
<svg class="abs" style="left:146.8px;top:122.4px" width="5.4" height="4" viewBox="0 0 5.4 4" preserveAspectRatio="none"><path d="M.4 .6L2.7 3L5 .6" fill="none" stroke="#666" stroke-width="1.2"/></svg>
<div class="pill" style="left:204px;width:87px"></div>
<svg class="abs" style="left:217.3px;top:118.8px" width="8.2" height="10.8" viewBox="0 0 8.2 10.8" preserveAspectRatio="none"><path d="M5.3 .6L.8 6H3.9L2.9 10.2L7.4 4.6H4.3Z" fill="none" stroke="#555" stroke-width="1.1" stroke-linejoin="round"/></svg>
<svg class="abs" style="left:271.8px;top:122.4px" width="5.4" height="4" viewBox="0 0 5.4 4" preserveAspectRatio="none"><path d="M.4 .6L2.7 3L5 .6" fill="none" stroke="#666" stroke-width="1.2"/></svg>
<div class="pill" style="left:1245px;width:67.5px"></div>
<svg class="abs" style="left:1257.5px;top:120.3px" width="9.6" height="7" viewBox="0 0 9.6 7" preserveAspectRatio="none"><path d="M0 .6H9.6M1.9 3.3H7.7M3.8 6H5.8" stroke="#555" stroke-width="1.15"/></svg>
<div class="pill" style="left:1316.5px;width:120px"></div>
<svg class="abs" style="left:1328.9px;top:119.2px" width="9.2" height="9.2" viewBox="0 0 9.2 9.2" preserveAspectRatio="none"><rect x=".6" y=".6" width="8" height="8" rx=".8" fill="none" stroke="#555" stroke-width="1.2"/><path d="M4.6 .6V8.6" stroke="#555" stroke-width="1.2"/></svg>
<span id="t1" class="tx h" style="left:71.5px;top:160.7px;letter-spacing:0.091px;">Candidate Name</span>
<span id="t2" class="tx h" style="left:207.3px;top:160.7px;letter-spacing:0.327px;">Job Title</span>
<span id="t3" class="tx h" style="left:358px;top:160.7px;letter-spacing:-0.316px;">Email</span>
<span id="t4" class="tx h" style="left:583.5px;top:160.7px;letter-spacing:0.273px;">Department</span>
<span id="t5" class="tx h" style="left:690.5px;top:160.7px;letter-spacing:0.372px;">Next Activity</span>
<span id="t6" class="tx h" style="left:802.5px;top:160.7px;letter-spacing:0.352px;">Last Activity</span>
<span id="t7" class="tx h" style="left:911.5px;top:160.7px;letter-spacing:0.208px;">Last Interview</span>
<span id="t8" class="tx h" style="left:1031px;top:160.7px;letter-spacing:0.059px;">Creation Date</span>
<span id="t9" class="tx h" style="left:1148.5px;top:161.2px;letter-spacing:0.059px;">Favorites</span>
<a id="t10" class="tx b" style="left:71.5px;top:200.8px;color:#337a9f;letter-spacing:0.018px;">amanda smith</a>
<span id="t11" class="tx b" style="left:583.5px;top:200.8px;color:#3f776d;letter-spacing:0.291px;">Construction</span>
<span id="t12" class="tx b" style="left:1059px;top:200.8px;color:#3f776d;letter-spacing:0.244px;">24 Nov 2025</span>
<a id="t13" class="tx b" style="left:71.5px;top:234.4px;color:#337a9f;letter-spacing:0.038px;">Andrew Keller</a>
<span id="t14" class="tx b" style="left:207px;top:234.4px;color:#3f776d;letter-spacing:0.087px;">Supply Chain Manager</span>
<a id="t15" class="tx b" style="left:358px;top:234.4px;color:#337a9f;letter-spacing:0.123px;">andrew.keller@yahoo.com</a>
<span id="t16" class="tx b" style="left:583.5px;top:234.4px;color:#3f776d;letter-spacing:0.291px;">Construction</span>
<span id="t17" class="tx b" style="left:1062px;top:234.4px;color:#3f776d;letter-spacing:-0.058px;">18 Sep 2025</span>
<a id="t18" class="tx b" style="left:71.5px;top:294.1px;color:#337a9f;letter-spacing:0.161px;">Andy Jones</a>
<span id="t19" class="tx b" style="left:207px;top:294.1px;color:#3f776d;letter-spacing:-1.200px;">CEO</span>
<a id="t20" class="tx b" style="left:358px;top:294.1px;color:#337a9f;letter-spacing:0.017px;">Andyisawesome@fake1email.com</a>
<span id="t21" class="tx b" style="left:1064px;top:294.1px;color:#3f776d;letter-spacing:-0.033px;">17 Jan 2024</span>
<a id="t22" class="tx b" style="left:711.5px;top:285.325px;color:#337a9f;letter-spacing:0.292px;">04 Sep 2025</a>
<a id="t23" class="tx b" style="left:690.5px;top:302.875px;color:#337a9f;letter-spacing:0.147px;">- call asap</a>
<a id="t24" class="tx b" style="left:824px;top:267.775px;color:#337a9f;letter-spacing:0.144px;">08 Dec</a>
<a id="t25" class="tx b" style="left:802.5px;top:285.325px;color:#337a9f;letter-spacing:0.344px;">2025 -</a>
<a id="t26" class="tx b" style="left:802.5px;top:302.875px;color:#337a9f;letter-spacing:0.100px;">Reference for</a>
<a id="t27" class="tx b" style="left:802.5px;top:320.425px;color:#337a9f;letter-spacing:0.217px;">Andy Jones</a>
<a id="t28" class="tx b" style="left:71.5px;top:379.2px;color:#337a9f;letter-spacing:0.096px;">Apolinar Camacho</a>
<span id="t29" class="tx b" style="left:207px;top:379.2px;color:#5f5f5f;letter-spacing:0.187px;">Application Specialist</span>
<a id="t30" class="tx b" style="left:358px;top:379.2px;color:#337a9f;letter-spacing:0.118px;">camacho.apolinar97@gmail.com</a>
<span id="t31" class="tx b" style="left:583.5px;top:379.2px;color:#5f5f5f;letter-spacing:0.209px;">Administrative</span>
<span id="t32" class="tx b" style="left:1062px;top:379.2px;color:#5f5f5f;letter-spacing:-0.056px;">21 Nov 2025</span>
<a id="t33" class="tx b" style="left:824px;top:352.875px;color:#337a9f;letter-spacing:-0.056px;">15 Dec 2025</a>
<a id="t34" class="tx b" style="left:802.5px;top:370.425px;color:#337a9f;letter-spacing:0.102px;">- Resumes for</a>
<a id="t35" class="tx b" style="left:802.5px;top:387.975px;color:#337a9f;letter-spacing:0.146px;">the role of Java</a>
<a id="t36" class="tx b" style="left:802.5px;top:405.525px;color:#337a9f;letter-spacing:0.057px;">Developer</a>
<a id="t37" class="tx b" style="left:71.5px;top:439px;color:#337a9f;letter-spacing:0.016px;">Avery Blanton</a>
<span id="t38" class="tx b" style="left:207px;top:439px;color:#5f5f5f;letter-spacing:0.067px;">Telemetry RN</span>
<a id="t39" class="tx b" style="left:358px;top:439px;color:#337a9f;letter-spacing:0.179px;">avery.blanton@vitalink.cxx</a>
<span id="t40" class="tx b" style="left:1057.5px;top:439px;color:#5f5f5f;letter-spacing:0.244px;">29 May 2025</span>
<a id="t41" class="tx b" style="left:71.8px;top:515.5px;color:#337a9f;letter-spacing:0.240px;">Ben Affleck</a>
<span id="t42" class="tx b" style="left:207px;top:515.5px;color:#5f5f5f;letter-spacing:0.176px;">Director</span>
<a id="t43" class="tx b" style="left:358px;top:515.5px;color:#337a9f;letter-spacing:0.194px;">benaffleck@fakeemail.com</a>
<span id="t44" class="tx b" style="left:1058.5px;top:515.5px;color:#5f5f5f;letter-spacing:0.294px;">08 Dec 2023</span>
<a id="t45" class="tx b" style="left:711.5px;top:471.925px;color:#337a9f;letter-spacing:-0.156px;">11 Dec 2025</a>
<a id="t46" class="tx b" style="left:690.5px;top:489.475px;color:#337a9f;letter-spacing:0.301px;">- Interview for</a>
<a id="t47" class="tx b" style="left:690.5px;top:507.025px;color:#337a9f;letter-spacing:0.103px;">Ben Affleck Re:</a>
<a id="t48" class="tx b" style="left:690.5px;top:524.575px;color:#337a9f;letter-spacing:-0.114px;">JOB-1335</a>
<a id="t49" class="tx b" style="left:690.5px;top:542.125px;color:#337a9f;letter-spacing:0.103px;">Software</a>
<a id="t50" class="tx b" style="left:690.5px;top:559.675px;color:#337a9f;letter-spacing:0.057px;">Developer</a>
<a id="t51" class="tx b" style="left:824px;top:489.175px;color:#337a9f;letter-spacing:-0.131px;">12 Feb 2026</a>
<a id="t52" class="tx b" style="left:802.5px;top:506.725px;color:#337a9f;letter-spacing:0.319px;">- Telephone</a>
<a id="t53" class="tx b" style="left:802.5px;top:524.275px;color:#337a9f;letter-spacing:0.017px;">Call with Ben</a>
<a id="t54" class="tx b" style="left:802.5px;top:541.825px;color:#337a9f;letter-spacing:0.453px;">Affleck</a>
<a id="t55" class="tx b" style="left:933.5px;top:480.4px;color:#337a9f;letter-spacing:-0.068px;">11 Dec 2025 -</a>
<a id="t56" class="tx b" style="left:911.5px;top:497.95px;color:#337a9f;letter-spacing:0.200px;">Interview for Ben</a>
<a id="t57" class="tx b" style="left:911.5px;top:515.5px;color:#337a9f;letter-spacing:0.165px;">Affleck Re: JOB-</a>
<a id="t58" class="tx b" style="left:911.5px;top:533.05px;color:#337a9f;letter-spacing:0.036px;">1335 Software</a>
<a id="t59" class="tx b" style="left:911.5px;top:550.6px;color:#337a9f;letter-spacing:0.119px;">Developer</a>
<a id="t60" class="tx b" style="left:71.5px;top:626.7px;color:#337a9f;letter-spacing:-0.289px;">Bena Shah</a>
<span id="t61" class="tx b" style="left:207px;top:618.725px;color:#5f5f5f;letter-spacing:0.054px;">Senior Quality</span>
<span id="t62" class="tx b" style="left:207px;top:636.275px;color:#5f5f5f;letter-spacing:0.115px;">Assurance Specialist</span>
<a id="t63" class="tx b" style="left:358px;top:626.7px;color:#337a9f;letter-spacing:0.172px;">bena.shah@demo-candidate.cox</a>
<span id="t64" class="tx b" style="left:1061.5px;top:626.7px;color:#5f5f5f;letter-spacing:-0.006px;">01 Nov 2023</span>
<a id="t65" class="tx b" style="left:711.5px;top:600.375px;color:#337a9f;letter-spacing:0.244px;">07 Nov 2025</a>
<a id="t66" class="tx b" style="left:690.5px;top:617.925px;color:#337a9f;letter-spacing:0.301px;">- Interview for</a>
<a id="t67" class="tx b" style="left:690.5px;top:635.475px;color:#337a9f;letter-spacing:-0.098px;">Bena Shah on</a>
<a id="t68" class="tx b" style="left:690.5px;top:653.025px;color:#337a9f;letter-spacing:0.161px;">JOB-1344 Test</a>
<a id="t69" class="tx b" style="left:824px;top:592.1px;color:#337a9f;letter-spacing:-0.006px;">16 Dec 2025</a>
<a id="t70" class="tx b" style="left:802.5px;top:609.65px;color:#337a9f;letter-spacing:0.262px;">- Thank You for</a>
<a id="t71" class="tx b" style="left:802.5px;top:627.2px;color:#337a9f;letter-spacing:0.073px;">Your</a>
<a id="t72" class="tx b" style="left:802.5px;top:644.75px;color:#337a9f;letter-spacing:0.200px;">Application,</a>
<a id="t73" class="tx b" style="left:802.5px;top:662.3px;color:#337a9f;letter-spacing:-0.344px;">Bena</a>
<a id="t74" class="tx b" style="left:933.5px;top:600.375px;color:#337a9f;letter-spacing:0.194px;">07 Nov 2025</a>
<a id="t75" class="tx b" style="left:911.5px;top:617.925px;color:#337a9f;letter-spacing:0.373px;">- Interview for</a>
<a id="t76" class="tx b" style="left:911.5px;top:635.475px;color:#337a9f;letter-spacing:-0.098px;">Bena Shah on</a>
<a id="t77" class="tx b" style="left:911.5px;top:653.025px;color:#337a9f;letter-spacing:0.203px;">JOB-1344 Test</a>
<a id="t78" class="tx b" style="left:71.5px;top:729.8px;color:#337a9f;letter-spacing:0.044px;">Benjamiñ dónnées</a>
<span id="t79" class="tx b" style="left:207px;top:721.025px;color:#5f5f5f;letter-spacing:0.133px;">Analyste de données</span>
<span id="t80" class="tx b" style="left:207px;top:738.575px;color:#5f5f5f;letter-spacing:0.044px;">senior</span>
<a id="t81" class="tx b" style="left:358px;top:729.8px;color:#337a9f;letter-spacing:0.110px;">benjamin.mercier@exemple.com</a>
<span id="t82" class="tx b" style="left:1063.5px;top:729.8px;color:#5f5f5f;letter-spacing:-0.131px;">15 Feb 2024</span>
<a id="t83" class="tx b" style="left:824px;top:695.2px;color:#337a9f;letter-spacing:-0.006px;">16 Dec 2025</a>
<a id="t84" class="tx b" style="left:802.5px;top:712.75px;color:#337a9f;letter-spacing:0.262px;">- Thank You for</a>
<a id="t85" class="tx b" style="left:802.5px;top:730.3px;color:#337a9f;letter-spacing:0.073px;">Your</a>
<a id="t86" class="tx b" style="left:802.5px;top:747.85px;color:#337a9f;letter-spacing:0.200px;">Application,</a>
<a id="t87" class="tx b" style="left:802.5px;top:765.4px;color:#337a9f;letter-spacing:0.603px;">Benjamiñ</a>
<span id="t88" class="tx p" style="left:75.2px;top:113.2px;letter-spacing:-0.443px;">Page 1 of 11</span>
<span id="t89" class="tx p" style="left:232.6px;top:113.2px;letter-spacing:0.150px;">Action</span>
<span id="t90" class="tx p" style="left:1273.7px;top:113.2px;letter-spacing:-0.036px;">Filter</span>
<span id="t91" class="tx p" style="left:1345px;top:113.2px;letter-spacing:-0.388px;">Columns</span>
<div class="abs" style="left:-10.3px;top:332.6px;width:106px;height:106px;border-radius:50%;background:rgba(255,158,78,.5);border:5px solid #f6953b"></div>
</body>
</html>
